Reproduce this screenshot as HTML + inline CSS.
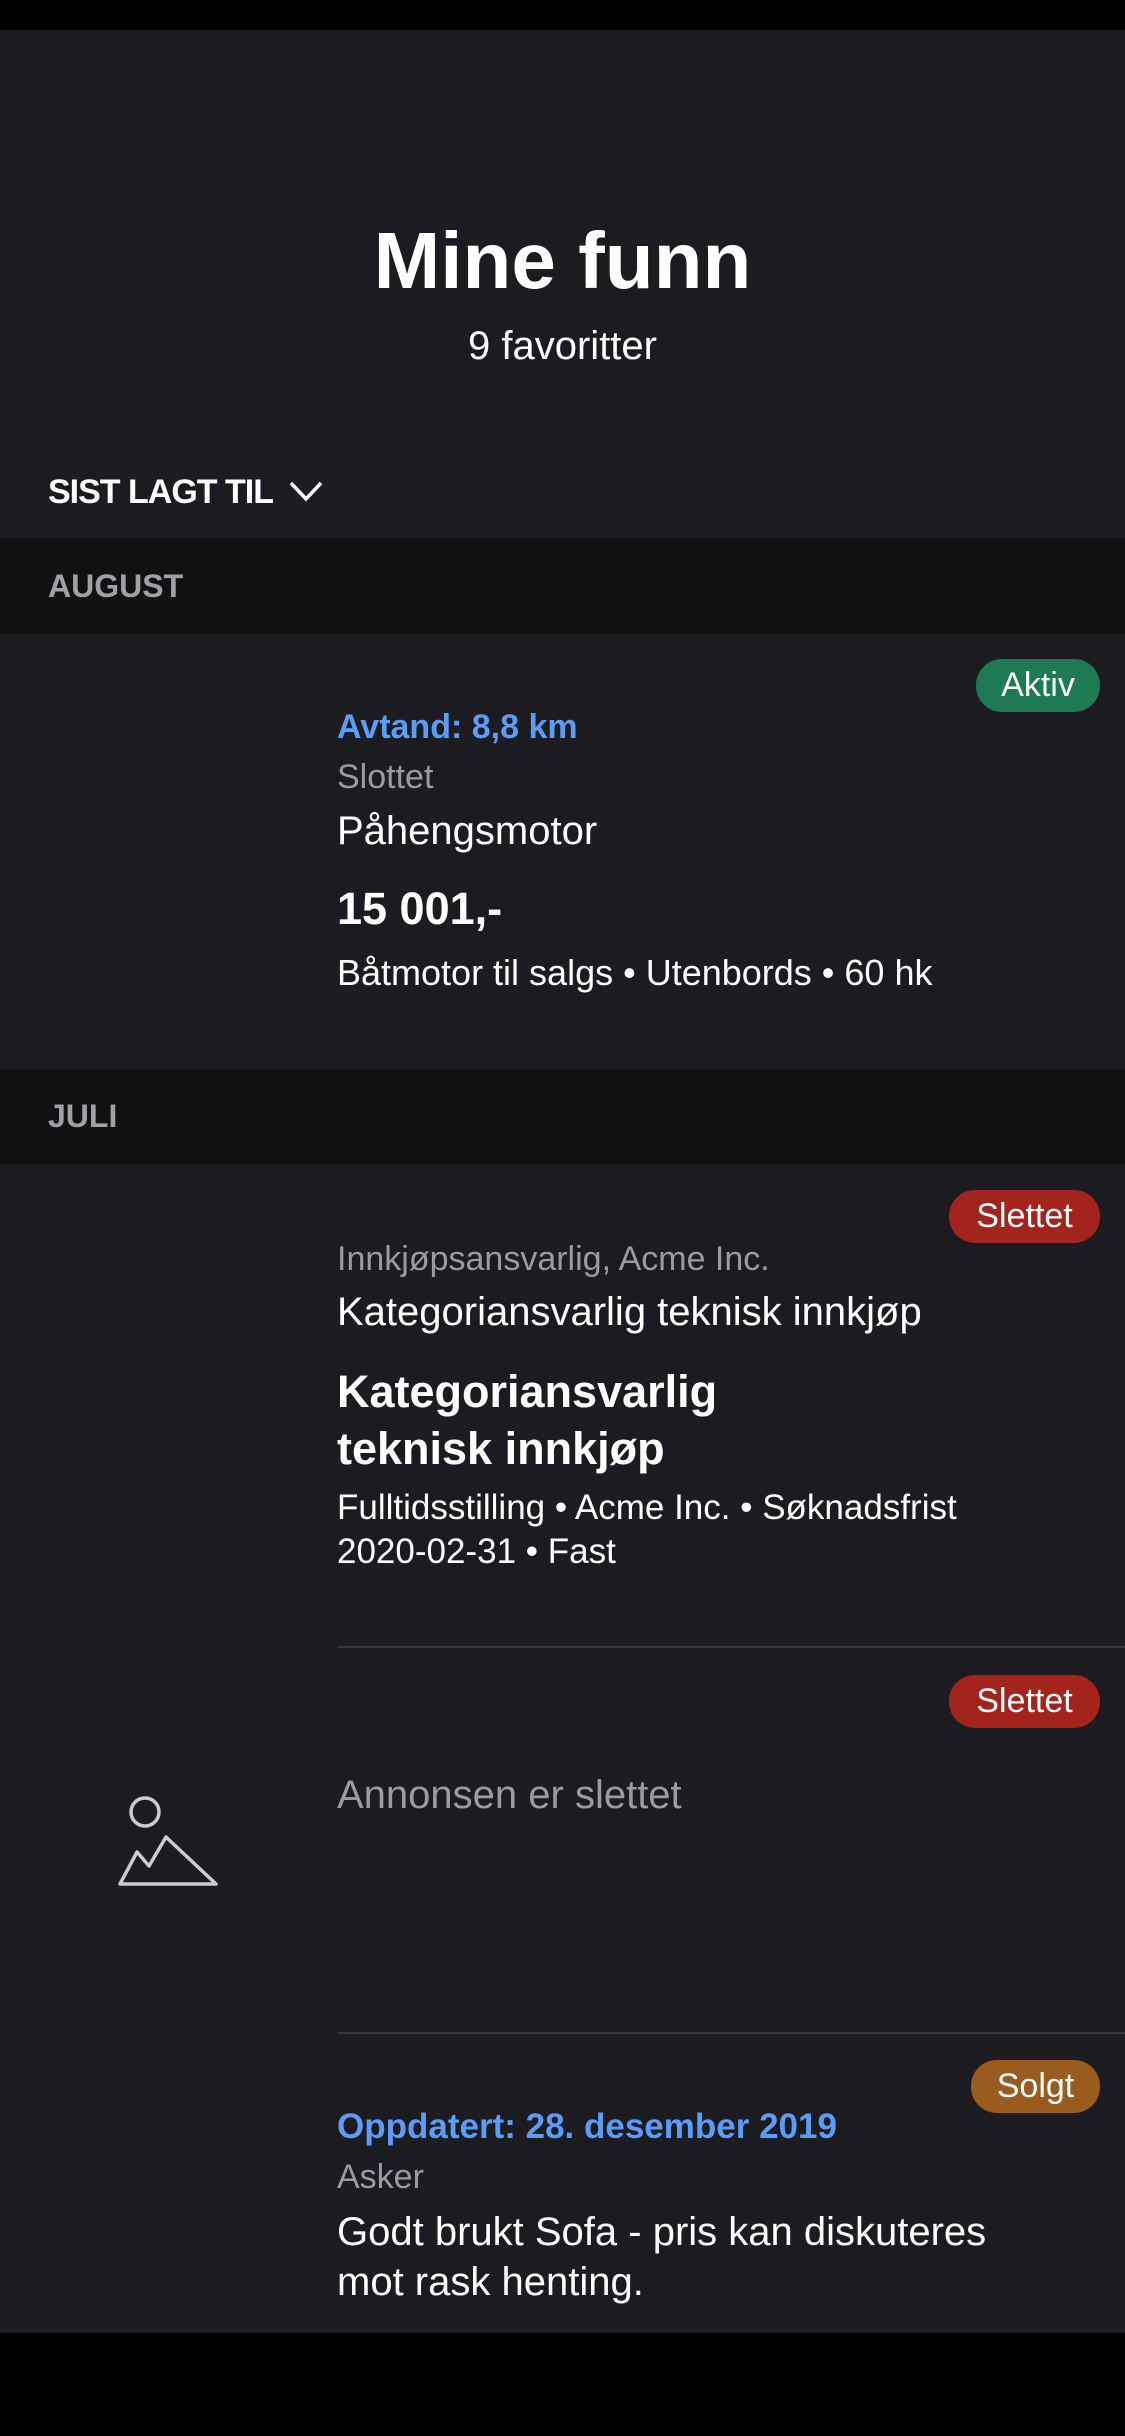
<!DOCTYPE html>
<html><head><meta charset="utf-8"><style>
*{margin:0;padding:0;box-sizing:border-box}
body{width:1125px;height:2436px;background:#000;font-family:"Liberation Sans",sans-serif;position:relative;overflow:hidden;color:#fff}
.a{position:absolute;white-space:nowrap}
.bg{position:absolute;left:0;width:1125px}
.badge{position:absolute;border-radius:26px;color:#fff;font-size:34px;text-align:center;line-height:53px;height:53px}
.g{color:#9a9aa0}
.b{color:#5a9cf8;font-weight:bold}
.sep{position:absolute;left:337px;right:0;height:2px;background:#35353a}
</style></head><body>
<div class="bg" style="top:30px;height:508px;background:#1c1c20"></div>
<div class="bg" style="top:538px;height:96px;background:#111112"></div>
<div class="bg" style="top:634px;height:435px;background:#1c1c20"></div>
<div class="bg" style="top:1069px;height:95px;background:#111112"></div>
<div class="bg" style="top:1164px;height:1169px;background:#1c1c20"></div>

<div class="a" style="left:0;width:1125px;text-align:center;top:211px;font-size:80px;line-height:100px;font-weight:bold">Mine funn</div>
<div class="a" style="left:0;width:1125px;text-align:center;top:323px;font-size:40px;line-height:46px">9 favoritter</div>
<div class="a" style="left:48px;top:472px;font-size:34px;line-height:40px;font-weight:bold;letter-spacing:-1px">SIST LAGT TIL</div>
<svg class="a" style="left:287px;top:478px" width="38" height="26"><path d="M4 5 L19 21 L34 5" stroke="#fff" stroke-width="3.5" fill="none"/></svg>

<div class="a" style="left:48px;top:566px;font-size:32px;line-height:40px;font-weight:bold;color:#a0a0a8">AUGUST</div>

<div class="badge" style="left:976px;top:659px;width:124px;background:#1e7a52">Aktiv</div>
<div class="a b" style="left:337px;top:707px;font-size:34px;line-height:40px">Avtand: 8,8 km</div>
<div class="a g" style="left:337px;top:757px;font-size:34px;line-height:40px">Slottet</div>
<div class="a" style="left:337px;top:808px;font-size:40px;line-height:46px">Påhengsmotor</div>
<div class="a" style="left:337px;top:883px;font-size:45px;line-height:52px;font-weight:bold">15 001,-</div>
<div class="a" style="left:337px;top:952px;font-size:36px;line-height:42px">Båtmotor til salgs • Utenbords • 60 hk</div>

<div class="a" style="left:48px;top:1096px;font-size:32px;line-height:40px;font-weight:bold;color:#a0a0a8">JULI</div>

<div class="badge" style="left:949px;top:1190px;width:151px;background:#a3241c">Slettet</div>
<div class="a g" style="left:337px;top:1239px;font-size:34px;line-height:40px">Innkjøpsansvarlig, Acme Inc.</div>
<div class="a" style="left:337px;top:1289px;font-size:40px;line-height:46px">Kategoriansvarlig teknisk innkjøp</div>
<div class="a" style="left:337px;top:1363px;font-size:45px;line-height:57px;font-weight:bold">Kategoriansvarlig<br>teknisk innkjøp</div>
<div class="a" style="left:337px;top:1486px;font-size:35px;line-height:44px">Fulltidsstilling • Acme Inc. • Søknadsfrist<br>2020-02-31 • Fast</div>

<div class="sep" style="top:1646px"></div>
<div class="badge" style="left:949px;top:1675px;width:151px;background:#a3241c">Slettet</div>
<div class="a g" style="left:337px;top:1772px;font-size:40px;line-height:46px">Annonsen er slettet</div>
<svg class="a" style="left:115px;top:1790px" width="110" height="100"><circle cx="30" cy="22" r="14" stroke="#c8ccd4" stroke-width="3.5" fill="none"/><path d="M5 94 L22 62 L34 76 L51 47 L101 94 Z" stroke="#c8ccd4" stroke-width="3.5" fill="none" stroke-linejoin="round"/></svg>

<div class="sep" style="top:2032px"></div>
<div class="badge" style="left:971px;top:2060px;width:129px;background:#9a5c1e">Solgt</div>
<div class="a b" style="left:337px;top:2107px;font-size:35px;line-height:40px">Oppdatert: 28. desember 2019</div>
<div class="a g" style="left:337px;top:2157px;font-size:34px;line-height:40px">Asker</div>
<div class="a" style="left:337px;top:2207px;font-size:40px;line-height:50px">Godt brukt Sofa - pris kan diskuteres<br>mot rask henting.</div>
</body></html>
